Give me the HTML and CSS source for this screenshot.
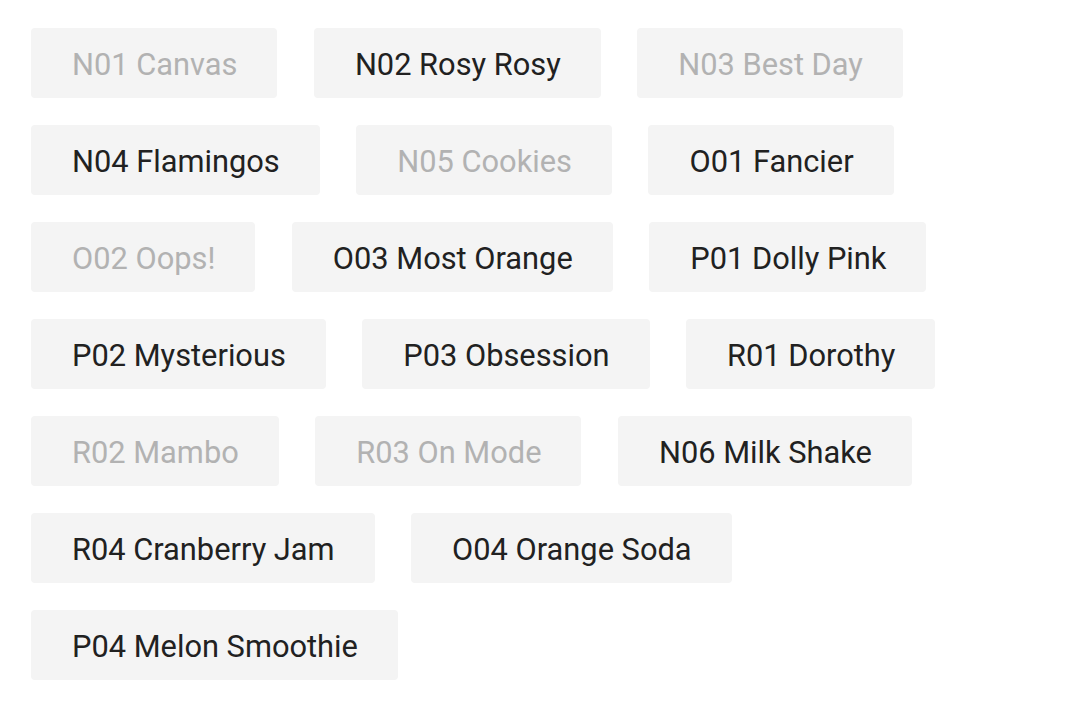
FILE: index.html
```html
<!DOCTYPE html>
<html>
<head>
<meta charset="utf-8">
<link rel="stylesheet" href="styles.css">
</head>
<body>
<div class="chips">
  <span class="chip off">N01 Canvas</span>
  <span class="chip">N02 Rosy Rosy</span>
  <span class="chip off">N03 Best Day</span>
  <span class="chip">N04 Flamingos</span>
  <span class="chip off">N05 Cookies</span>
  <span class="chip">O01 Fancier</span>
  <span class="chip off">O02 Oops!</span>
  <span class="chip">O03 Most Orange</span>
  <span class="chip">P01 Dolly Pink</span>
  <span class="chip">P02 Mysterious</span>
  <span class="chip">P03 Obsession</span>
  <span class="chip">R01 Dorothy</span>
  <span class="chip off">R02 Mambo</span>
  <span class="chip off">R03 On Mode</span>
  <span class="chip">N06 Milk Shake</span>
  <span class="chip">R04 Cranberry Jam</span>
  <span class="chip">O04 Orange Soda</span>
  <span class="chip">P04 Melon Smoothie</span>
</div>
</body>
</html>
```
FILE: styles.css
```css
html, body {
  margin: 0;
  padding: 0;
  background: #ffffff;
}
.chips {
  display: flex;
  flex-wrap: wrap;
  column-gap: 36.5px;
  row-gap: 27px;
  padding: 28px 31px;
  width: 1000px;
}
.chip {
  display: flex;
  align-items: center;
  height: 70px;
  padding: 2px 40px 0 41px;
  background: #f4f4f4;
  border-radius: 4px;
  font-family: Roboto, "Liberation Sans", sans-serif;
  font-size: 30.8px;
  color: #212121;
  box-sizing: border-box;
}
.chip.off {
  color: #b2b2b2;
}
```
